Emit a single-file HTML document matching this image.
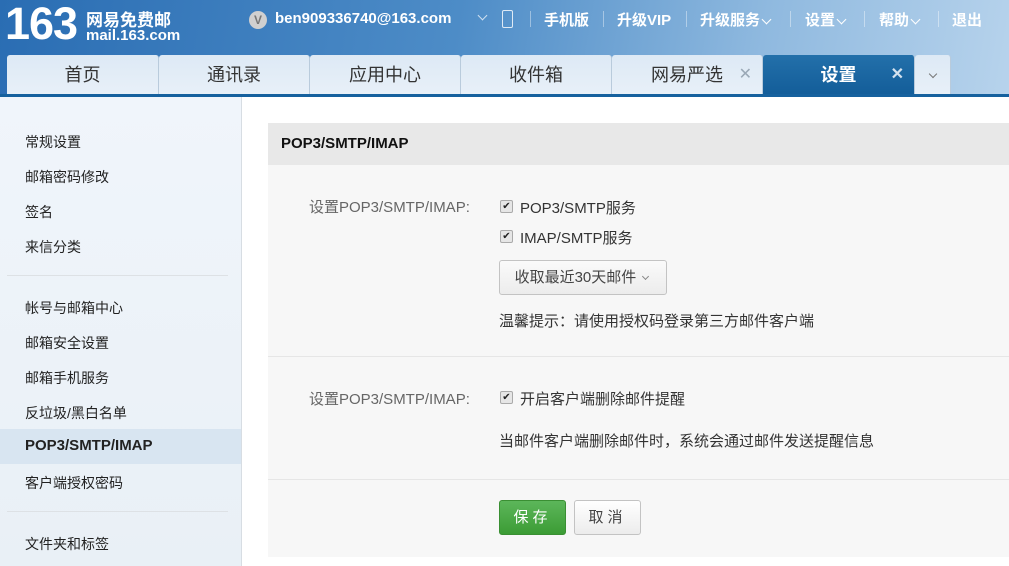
<!DOCTYPE html>
<html><head><meta charset="utf-8"><style>
*{margin:0;padding:0;box-sizing:border-box}
body{width:1009px;height:566px;overflow:hidden;font-family:"Liberation Sans","Noto Sans CJK SC",sans-serif;background:#fff;position:relative}
.hd{position:absolute;left:0;top:0;width:1009px;height:96px;background:linear-gradient(100deg,#2a6db3 0%,#4d8cc7 45%,#8fb9df 75%,#b7d3ec 100%)}
.logo{position:absolute;left:5px;top:1px;color:#fff;font:bold 45px/46px "Liberation Sans",sans-serif;letter-spacing:-1px}
.lt1{position:absolute;left:86px;top:6px;color:#fff;font-size:17px;font-weight:bold}
.lt2{position:absolute;left:86px;top:27px;color:#fff;font-size:15px;font-weight:bold}
.vb{position:absolute;left:249px;top:11px;width:18px;height:18px;border-radius:50%;background:#d0d0d0;color:#777;font:bold 12px/18px "Liberation Sans";text-align:center}
.user{position:absolute;left:275px;top:10px;color:#fff;font-size:15px;font-weight:bold}
.nav{position:absolute;top:9px;color:#fff;font-size:15px;font-weight:bold}
.sep{position:absolute;top:11px;width:1px;height:16px;background:rgba(255,255,255,.4)}
.chev{display:inline-block;width:7px;height:7px;border-right:1.5px solid currentColor;border-bottom:1.5px solid currentColor;transform:rotate(45deg);margin:0 3px 4px 3px;vertical-align:middle}
.tab{position:absolute;top:55px;height:40px;background:linear-gradient(#dde9f5,#e8f0f8);border-right:1px solid #b9cbdc;font-size:18px;color:#333;text-align:center;line-height:40px;border-radius:3px 3px 0 0}
.tab .x{position:absolute;right:10px;top:0;color:#9aa8b6;font-size:16px}
.tab.a{background:linear-gradient(#2370aa,#135d99);color:#fff;font-weight:bold}
.tab.a .x{color:#d4e2ef}
.bar{position:absolute;left:0;top:94px;width:1009px;height:3px;background:#16619e}
.side{position:absolute;left:0;top:97px;width:242px;height:469px;background:linear-gradient(#f0f5fb,#e9f0f6);border-right:1px solid #d7dde3}
.si{position:absolute;left:25px;font-size:14px;color:#222}
.hl{position:absolute;left:0;top:332px;width:241px;height:35px;background:#d8e5f1}
.hr{position:absolute;left:7px;width:221px;height:1px;background:#dde1e5}
.panel{position:absolute;left:268px;top:123px;width:741px;height:434px;background:#f7f7f7}
.ph{height:42px;background:#e8e8e8;font-weight:bold;font-size:15px;line-height:42px;padding-left:13px;color:#111}
.lab{position:absolute;font-size:15px;color:#666}
.txt{position:absolute;font-size:15px;color:#333}
.cb{position:absolute;width:13px;height:13px;border:1px solid #aaa;border-radius:2px;background:#e6e6e6;font-size:10px;line-height:11px;text-align:center;color:#222}
.dv{position:absolute;left:0;width:741px;height:1px;background:#e6e6e6}
.btn{position:absolute;height:35px;border-radius:3px;font-size:15px;line-height:33px;text-align:center;letter-spacing:4px}
</style></head><body>
<div class="hd">
<div class="logo">163</div>
<div class="lt1">网易免费邮</div>
<div class="lt2">mail.163.com</div>
<div class="vb">V</div>
<div class="user">ben909336740@163.com</div>
<div class="nav" style="left:476px;top:8px;color:#cfe0f0"><span class="chev"></span></div>
<div style="position:absolute;left:502px;top:10px;width:11px;height:18px;border:1.5px solid #dfeaf5;border-radius:2px"></div>
<div class="sep" style="left:530px"></div>
<div class="nav" style="left:544px">手机版</div>
<div class="sep" style="left:603px"></div>
<div class="nav" style="left:617px">升级VIP</div>
<div class="sep" style="left:686px"></div>
<div class="nav" style="left:700px">升级服务<span class="chev"></span></div>
<div class="sep" style="left:790px"></div>
<div class="nav" style="left:805px">设置<span class="chev"></span></div>
<div class="sep" style="left:864px"></div>
<div class="nav" style="left:879px">帮助<span class="chev"></span></div>
<div class="sep" style="left:938px"></div>
<div class="nav" style="left:952px">退出</div>
<div class="tab" style="left:7px;width:152px">首页</div>
<div class="tab" style="left:159px;width:151px">通讯录</div>
<div class="tab" style="left:310px;width:151px">应用中心</div>
<div class="tab" style="left:461px;width:151px">收件箱</div>
<div class="tab" style="left:612px;width:151px">网易严选<span class="x">✕</span></div>
<div class="tab a" style="left:763px;width:152px">设置<span class="x">✕</span></div>
<div class="tab" style="left:915px;width:36px;color:#777"><span class="chev" style="width:6px;height:6px"></span></div>
</div>
<div class="bar"></div>
<div class="side">
<div class="si" style="top:35px">常规设置</div>
<div class="si" style="top:70px">邮箱密码修改</div>
<div class="si" style="top:105px">签名</div>
<div class="si" style="top:140px">来信分类</div>
<div class="hr" style="top:178px"></div>
<div class="si" style="top:201px">帐号与邮箱中心</div>
<div class="si" style="top:236px">邮箱安全设置</div>
<div class="si" style="top:271px">邮箱手机服务</div>
<div class="si" style="top:306px">反垃圾/黑白名单</div>
<div class="hl"></div>
<div class="si" style="top:340px;font-weight:bold;font-size:15px">POP3/SMTP/IMAP</div>
<div class="si" style="top:376px">客户端授权密码</div>
<div class="hr" style="top:414px"></div>
<div class="si" style="top:437px">文件夹和标签</div>
</div>
<div class="panel">
<div class="ph">POP3/SMTP/IMAP</div>
<div class="lab" style="left:41px;top:73px">设置POP3/SMTP/IMAP:</div>
<div class="cb" style="left:232px;top:77px">✔</div><div class="txt" style="left:252px;top:74px">POP3/SMTP服务</div>
<div class="cb" style="left:232px;top:107px">✔</div><div class="txt" style="left:252px;top:104px">IMAP/SMTP服务</div>
<div class="btn" style="left:231px;top:137px;width:168px;border:1px solid #c3c3c3;background:linear-gradient(#fafafa,#ececec);color:#444;letter-spacing:0;font-size:15px">收取最近30天邮件 <span class="chev" style="width:5px;height:5px;color:#888;border-width:1px"></span></div>
<div class="txt" style="left:231px;top:187px">温馨提示：请使用授权码登录第三方邮件客户端</div>
<div class="dv" style="top:233px"></div>
<div class="lab" style="left:41px;top:265px">设置POP3/SMTP/IMAP:</div>
<div class="cb" style="left:232px;top:268px">✔</div><div class="txt" style="left:252px;top:265px">开启客户端删除邮件提醒</div>
<div class="txt" style="left:231px;top:307px">当邮件客户端删除邮件时，系统会通过邮件发送提醒信息</div>
<div class="dv" style="top:356px"></div>
<div class="btn" style="left:231px;top:377px;width:67px;background:linear-gradient(#5cb65a,#3c9c35);border:1px solid #3a8f33;color:#fff">保存</div>
<div class="btn" style="left:306px;top:377px;width:67px;background:linear-gradient(#fff,#ececec);border:1px solid #c3c3c3;color:#444">取消</div>
</div>
</body></html>
